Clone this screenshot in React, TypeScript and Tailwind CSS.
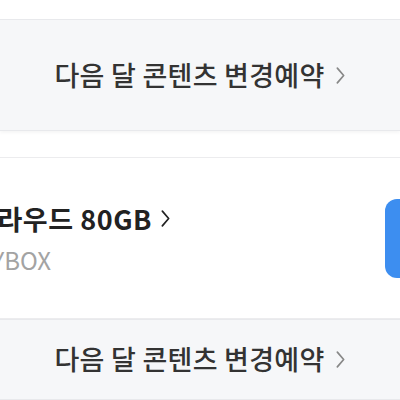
const Chevron = ({ className }: { className: string }) => (
  <svg className={className} viewBox="0 0 10 18" fill="none" stroke="currentColor" strokeWidth={1.6} strokeLinecap="round" strokeLinejoin="round">
    <path d="M2 2l6 7-6 7" />
  </svg>
);

const ReserveBanner = () => (
  <div className="flex flex-1 items-center justify-center gap-[10px] border-y border-[#e8e9ec] bg-[#f6f7f9] shadow-[0_2px_3px_rgba(0,0,0,0.04)]">
    <span className="text-[27px] font-medium tracking-[0.01em] text-[#333]">다음 달 콘텐츠 변경예약</span>
    <Chevron className="h-[19px] w-[11px] text-[#888]" />
  </div>
);

export default function App() {
  return (
    <div
      className="flex h-[400px] w-[400px] flex-col overflow-hidden bg-white"
      style={{ fontFamily: '"Noto Sans CJK KR", "Noto Sans", sans-serif' }}
    >
      <div className="h-[19px] shrink-0" />
      <div className="flex h-[112px] shrink-0 flex-col">
        <ReserveBanner />
      </div>
      <div className="h-[26px] shrink-0" />

      {/* Cloud product card */}
      <div className="flex h-[162px] shrink-0 items-center justify-between border-y border-[#ececee]">
        <div className="-ml-[28px] flex flex-col gap-[9px]">
          <div className="flex items-center gap-[8px]">
            <span className="text-[27px] font-bold leading-[34px] tracking-[0.02em] text-[#222]">클라우드 80GB</span>
            <Chevron className="h-[19px] w-[11px] text-[#222]" />
          </div>
          <span className="text-[24px] leading-[30px] text-[#a3a3a3]">MYBOX</span>
        </div>
        <div className="mr-[-30px] h-[79px] w-[45px] rounded-[12px] bg-[#3d8ef0]" />
      </div>

      <div className="flex flex-1 flex-col">
        <ReserveBanner />
      </div>
    </div>
  );
}
